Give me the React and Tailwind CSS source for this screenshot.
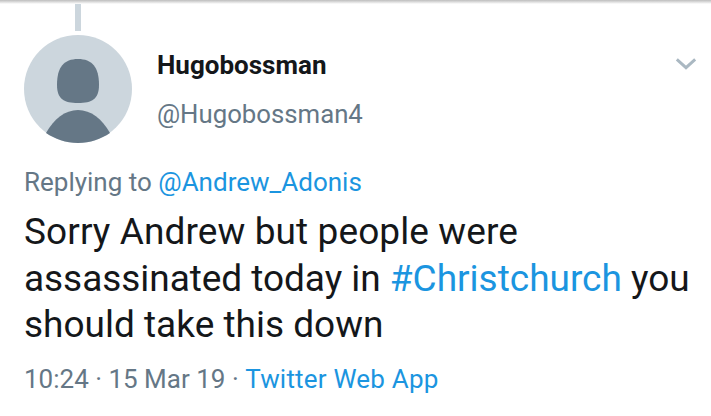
const Avatar = () => (
  <svg viewBox="0 0 108 108" className="w-[108px] h-[108px] shrink-0">
    <circle cx="54" cy="54" r="54" fill="#ccd6dd" />
    <path d="M54 24 C68 24 75 32 75 50 C75 64 68 68 54 68 C40 68 33 64 33 50 C33 32 40 24 54 24 Z" fill="#657786" />
    <path d="M22 98 C30 84 41 75 54 75 C67 75 78 84 86 98 C77 104 66 108 54 108 C42 108 31 104 22 98 Z" fill="#657786" />
  </svg>
)

function App() {
  return (
    <div className="w-[711px] h-[416px] overflow-hidden bg-white text-[#14171a] font-['Roboto',sans-serif]">
      <div className="h-1 bg-gradient-to-b from-[#bdbdbd] to-white" />
      <div className="pl-[75px] h-[27px]">
        <div className="w-[6px] h-full bg-[#ccd6dd]" />
      </div>
      <div className="flex pl-6 pr-[14px] pt-[4px]">
        <Avatar />
        <div className="ml-[25px] flex-1">
          <div className="font-bold text-[26px] leading-[30px] mt-[15px]">Hugobossman</div>
          <div className="text-[#657786] text-[25.75px] leading-[30px] mt-[19px]">@Hugobossman4</div>
        </div>
        <svg viewBox="0 0 24 14" className="w-[22px] h-[14px] mt-[22px] fill-none stroke-[#aab8c2] stroke-[3.2]">
          <path d="M2 2 L12 11 L22 2" />
        </svg>
      </div>
      <div className="pl-6 text-[26px] leading-[30px] mt-[24px] text-[#657786]">
        Replying to <span className="text-[#1b95e0]">@Andrew_Adonis</span>
      </div>
      <div className="pl-6 text-[37px] leading-[46.5px] mt-[12px] whitespace-nowrap">
        <div className="tracking-[0.1px]">Sorry Andrew but people were</div>
        <div><span className="tracking-[-0.05px]">assassinated today in</span> <span className="text-[#1b95e0]">#Christchurch</span> you</div>
        <div>should take this down</div>
      </div>
      <div className="pl-6 text-[26px] leading-[30px] mt-[15px] text-[#657786]">
        10:24 · 15 Mar 19 · <span className="text-[#1b95e0] tracking-[0.2px]">Twitter Web App</span>
      </div>
    </div>
  )
}

export default App
